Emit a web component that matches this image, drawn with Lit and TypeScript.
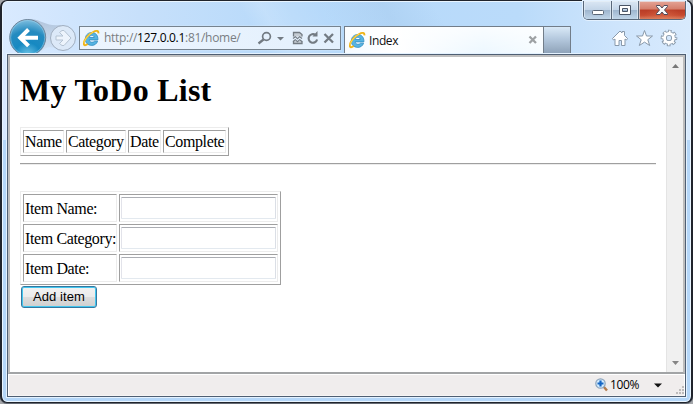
import { LitElement, html, css, svg } from "lit";
import { customElement } from "lit/decorators.js";

const ieLogo = html`<svg class="ie" width="17" height="17" viewBox="0 0 17 17">
  <path d="M14.900 9.900H6.200c.2 1.600 1.200 2.400 2.800 2.400 1.100 0 1.900-.4 2.400-1.100h3.200c-.9 2.700-3 4.200-5.900 4.200-3.700 0-6.400-2.600-6.400-6.200C2.300 5.300 5 2.500 8.700 2.500c4 0 6.500 2.900 6.200 7.400zM6.300 7.500h4.900C11 6.100 10.200 5.300 8.800 5.300S6.500 6.100 6.300 7.500z" fill="#56b4e2" stroke="#2f8bc0" stroke-width=".8"/>
  <path d="M4.300 5.300C5.500 3.800 7 3.300 8.500 3.300" fill="none" stroke="#a0def5"/>
  <path d="M4.700 14.100C2.500 15.800.8 15.800.8 13.600.9 9.700 5.300 4.400 10.200 2c3.300-1.700 5.700-1.500 5.100 1.400" fill="none" stroke="#efb51b" stroke-width="1.900"/>
  <path d="M1 13C1.800 9 6 4.500 10.200 2" fill="none" stroke="#ffe36a" stroke-width=".8"/>
</svg>`;

@customElement("app-root")
export class AppRoot extends LitElement {
  static styles = css`
    :host { display: block; width: 693px; height: 404px; background: #a4a6aa; overflow: hidden; }
    * { box-sizing: border-box; }
    svg { display: block; flex: none; }
    .window {
      width: 693px; height: 403px; padding: 0 5px 5px; border: 1px solid #20242c; border-left-width: 2px;
      border-right-width: 2px; border-radius: 7px;
      box-shadow: inset 0 0 0 1px #e9f5ff, 0 1px #666b74;
      background:
        linear-gradient(60deg, transparent 0 37%, #ffffff28 40%, transparent 48%, #7fa9d025 57%, transparent 64%) 0 0 / 100% 55px no-repeat,
        linear-gradient(90deg, #d9eaff 0, #c7e0fb 20%, #b6d9fa 42%, #badbfa 75%, #cfe5fc 90%, #d8eafd 100%) 0 0 / 100% 139px no-repeat,
        #b4d6f8;
    }
    .caption { height: 25px; display: flex; justify-content: flex-end; }
    .controls { display: flex; width: 103px; height: 19px; border: 1px solid #59687a; border-top: 0; border-radius: 0 0 5px 5px; overflow: hidden; box-shadow: 0 0 0 1px #e3f1ff; }
    .control { width: 28px; height: 19px; display: flex; background: linear-gradient(#dbe7f4, #c3d5e8 46%, #9fb6cf 50%, #c4d9ec); border-right: 1px solid #59687a; box-shadow: inset 0 0 0 1px #e7f0f8aa; }
    .control.max { width: 27px; }
    .control.close { width: 47px; border-right: 0; background: radial-gradient(ellipse at 50% 110%, #ee8a5e66, transparent 60%), linear-gradient(#e5a597, #d47e6c 42%, #b93c26 48%, #c64a30 75%, #dd8a6a); }
    .tools { height: 27px; display: flex; align-items: flex-start; }
    .nav { margin: -8px 0 0 1px; width: 71px; }
    .address { width: 262px; height: 24px; border: 1px solid #76838f; background: linear-gradient(90deg, #edf5fe, #e3f0fd); display: flex; align-items: center; padding-left: 3px; box-shadow: 0 0 0 1px #d7e9fb55; }
    .url { width: 137px; margin-left: 4px; white-space: pre; font: 12px/20px "Open Sans", sans-serif; color: #7a7e83; letter-spacing: -.3px; }
    .url b { font-weight: 400; color: #000; }
    .marks { margin-left: 15px; }
    .tab { margin-left: 3px; width: 200px; height: 27px; border: 1px solid #727d89; border-bottom: 0; background: linear-gradient(#ffffffc0, #ffffff30), linear-gradient(90deg, #f2f9ff, #ffffff 25%, #e9f6ff 70%, #f4fbff); display: flex; align-items: center; padding-left: 4px; }
    .title { flex: 1; margin: 1px 0 0 3px; font: 12px/20px "Open Sans", sans-serif; letter-spacing: -.4px; color: #111; }
    .tab .x { margin-right: 5px; }
    .newtab { width: 27px; height: 27px; border: 1px solid #727d89; border-left: 0; border-bottom: 0; background: linear-gradient(#d9e9f7, #b5c9de 45%, #8fa3b9); }
    .cmds { margin: 2px 0 0 39px; }
    .frame { width: 679px; height: 343px; margin-top: 1px; border: 1px solid #4f5f73; display: flex; flex-direction: column; box-shadow: 0 0 0 1px #e4f2ff; }
    .view { height: 319px; border: 2px solid #bdbdbd; border-top-color: #c0c0c0; border-bottom-color: #a2a4a6; display: flex; background: #fff; }
    .page { flex: 1; padding: 14px 10px 0 10px; font: 16px/18px "Liberation Serif", serif; letter-spacing: -.38px; color: #000; }
    h1 { margin: 0; height: 56px; font: bold 32px/39px "Liberation Serif", serif; letter-spacing: .25px; }
    .scroll { width: 17px; background: #f0f0f0; border-left: 1px solid #e4e4e4; display: flex; flex-direction: column; justify-content: space-between; padding: 6px 0 6px 4px; }
    .grid { display: grid; gap: 2px; padding: 2px; border: 1px solid; border-color: #ececec #9f9f9f #9f9f9f #ececec; }
    .cell { border: 1px solid; border-color: #9f9f9f #ececec #ececec #9f9f9f; padding-left: 1px; display: flex; align-items: center; white-space: nowrap; }
    .list { width: 209px; height: 29px; grid-template-columns: 41px 60px 33px 63px; }
    .rule { height: 2px; margin-top: 7px; border-top: 1px solid #9f9f9f; border-bottom: 1px solid #ececec; }
    .form { margin-top: 26px; width: 261px; height: 94px; grid-template-columns: 94px 159px; grid-template-rows: repeat(3, 28px); }
    .form .label { padding-top: 2px; }
    .field { display: block; width: 155px; height: 22px; padding: 0 3px; background: #fff; border: 1px solid; border-color: #abadb3 #dbdfe6 #e3e9ef #e2e3ea; border-radius: 1px; outline: 0; }
    .form .cell:not(.label) { align-items: flex-start; padding-top: 2px; }
    .add { display: block; width: 76px; height: 22px; margin: 1px 0 0 1px; padding: 0; border: 1px solid #3577a0; border-radius: 3px; background: linear-gradient(#f2f2f2, #ebebeb 48%, #dddddd 50%, #cfcfcf); box-shadow: inset 0 0 0 1px #42c6ee; font: 13px/18px "Liberation Sans", sans-serif; letter-spacing: .1px; color: #000; }
    .status { flex: 1; background: #f0eded; border: 1px solid #fff; border-bottom-color: #f7f5f5; display: flex; align-items: center; padding-left: 586px; font: 12px/20px "Open Sans", sans-serif; letter-spacing: -.4px; color: #000; }
    .zoom { width: 45px; margin-left: 1px; }
    .grip { align-self: flex-end; margin-left: 13px; }
  `;

  render() {
    const dots = [[7, 0], [4, 3], [7, 3], [1, 6], [4, 6], [7, 6]];
    return html`<div class="window">
      <div class="caption"><div class="controls">
        <div class="control"><svg width="28" height="19"><rect x="8.500" y="9.500" width="11" height="4" rx="1" fill="#fff" stroke="#596575"/></svg></div>
        <div class="control max"><svg width="27" height="19"><path d="M7.500 4.500h11v9h-11zM10.500 7.500v3h5v-3z" fill="#fff" fill-rule="evenodd" stroke="#4a5566"/></svg></div>
        <div class="control close"><svg width="47" height="19"><path d="M17.500 4.500h3.500l2 2.500 2-2.500h3.500v1L25.500 9l3 3.500v1H25l-2-2.500-2 2.500h-3.500v-1l3-3.500-3-3.500z" fill="#f8f8f8" stroke="#4e4b5b"/></svg></div>
      </div></div>
      <div class="tools">
        <svg class="nav" width="71" height="35" viewBox="8 18 71 35">
          <defs>
            <radialGradient id="orb" cx=".5" cy="1" r=".95"><stop offset="0" stop-color="#74c7e8"/><stop offset=".38" stop-color="#1689c2"/><stop offset=".72" stop-color="#258bc0"/><stop offset="1" stop-color="#72b7db"/></radialGradient>
            <linearGradient id="neck" x2="0" y2="1"><stop stop-color="#9eb1c8"/><stop offset="1" stop-color="#d5e4f5"/></linearGradient>
          </defs>
          <path d="M31 19C42 20 47 27 61 25v24C51 47 46 45 41 53z" fill="url(#neck)" opacity=".65"/>
          <circle cx="27.700" cy="37.500" r="18" fill="url(#orb)" stroke="#72869b"/>
          <circle cx="27.700" cy="37.500" r="17" fill="none" stroke="#a9d7ee" stroke-opacity=".45"/>
          <path d="M38 37.700H21M28.500 29.500l-8.300 8.200 8.300 8.200" fill="none" stroke="#fff" stroke-width="4"/>
          <circle cx="63" cy="38" r="12.500" fill="#dce9f8" stroke="#a0aebf"/>
          <path d="M56 36h7l-3.500-3.500L62 30.500h2l7 7.500-7 7.500h-2l-2.500-2L63 40h-7z" fill="#edf4fc" stroke="#b5c3d2"/>
        </svg>
        <div class="address">${ieLogo}<span class="url">http://<b>127.0.0.1</b>:81/home/</span>
          <svg class="marks" width="80" height="18" viewBox="256 29 80 18">
            <g fill="none" stroke="#737b83">
              <circle cx="266.500" cy="36.500" r="3.900" stroke-width="1.700"/><path d="M263.500 39.500l-5 4" stroke-width="2.300"/>
              <path d="M293.500 36.500v-4h6l2.500 2v2M293.500 41v2.500h8.500V41" fill="#c5ccd3" stroke-width="1.300"/>
              <path d="M293 38.500l2.300-1.800 2.200 2 2.200-2 2.300 1.800M293 41.500l2.300-1.800 2.200 2 2.200-2 2.300 1.800" stroke-width="1.100"/>
              <path d="M315.500 35a4.300 4.300 0 1 0 1.600 4.500" stroke-width="2.100"/>
              <path d="M324.500 34l8.500 8.500m0-8.500l-8.500 8.500" stroke-width="2.300"/>
            </g>
            <path d="M277 37h7l-3.500 3.500zM312.500 36.500h5V31z" fill="#737b83"/>
          </svg>
        </div>
        <div class="tab">${ieLogo}<span class="title">Index</span>
          <svg class="x" width="10" height="10"><path d="M1.500 1.500l6.500 6.500m0-6.500L1.500 8" stroke="#9da1a4" stroke-width="2.300"/></svg></div>
        <div class="newtab"></div>
        <svg class="cmds" width="70" height="20" viewBox="610 28 70 20">
          <g fill="#fff" stroke="#8999aa" stroke-linejoin="round">
            <path d="M612.500 38.500l7.500-7.500 2 2v-1.500h2.500v4l3 3-1 1.500-1.500-1v6.500h-3.500v-5h-2.500v5H615v-6.500l-1.500 1z"/>
            <path d="M644.500 30.500l2 5.500h6l-4.700 3.700 1.900 5.800-5.200-3.400-5.200 3.400 1.900-5.800-4.700-3.700h6z"/>
          </g>
          <g fill="none">
            <circle cx="669" cy="38" r="6.500" stroke="#8999aa" stroke-width="3.600" stroke-dasharray="3.300 1.805" stroke-dashoffset="1.650"/>
            <circle cx="669" cy="38" r="4.500" stroke="#8999aa" stroke-width="4.600"/>
            <circle cx="669" cy="38" r="6.200" stroke="#fff" stroke-width="2.400" stroke-dasharray="1.700 3.169" stroke-dashoffset=".850"/>
            <circle cx="669" cy="38" r="4.500" stroke="#fff" stroke-width="2.800"/>
          </g>
        </svg>
      </div>
      <div class="frame">
        <div class="view">
          <main class="page">
            <h1>My ToDo List</h1>
            <div class="grid list">${["Name", "Category", "Date", "Complete"].map((t) => html`<div class="cell">${t}</div>`)}</div>
            <div class="rule"></div>
            <div class="grid form">${["Item Name:", "Item Category:", "Item Date:"].map((t) => html`<div class="cell label">${t}</div><div class="cell"><input class="field" aria-label=${t}></div>`)}</div>
            <button class="add">Add item</button>
          </main>
          <div class="scroll">
            <svg width="9" height="6"><path d="M1 5l3.500-4L8 5z" fill="#777"/></svg>
            <svg width="9" height="6"><path d="M1 1l3.500 4L8 1z" fill="#858585"/></svg>
          </div>
        </div>
        <div class="status">
          <svg width="14" height="14"><path d="M8 8l4 4.500" stroke="#b37c4d" stroke-width="2.500"/><circle cx="5.500" cy="5.500" r="4.700" fill="#d4edff" stroke="#8ea4bb" stroke-width="1.200"/><path d="M5.500 2.500v6m-3-3h6" stroke="#1565c3" stroke-width="2.200"/></svg>
          <span class="zoom">100%</span>
          <svg width="8" height="5"><path d="M0 .5h8L4 4.500z" fill="#111"/></svg>
          <svg class="grip" width="9" height="9">${dots.map(([x, y]) => svg`<rect x=${x} y=${y} width="2" height="2" fill="#bebcbc"/>`)}</svg>
        </div>
      </div>
    </div>`;
  }
}
